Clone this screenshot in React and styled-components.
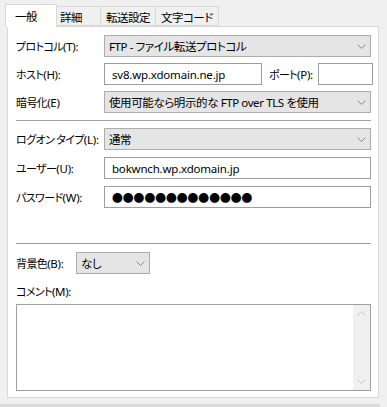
import React from "react";
import styled, { createGlobalStyle } from "styled-components";

const GlobalStyle = createGlobalStyle`
   html, body {
      margin: 0;
      padding: 0;
      background: #f0f0f0;
   }
   body {
      font-family: "Noto Sans", "Noto Sans CJK JP", sans-serif;
      font-size: 11.5px;
      color: #000;
      font-feature-settings: "palt";
   }
`;

const Window = styled.div`
   width: 387px;
   height: 407px;
   padding-top: 4px;
   box-sizing: border-box;
   overflow: hidden;
`;

const TabBar = styled.div`
   display: flex;
   align-items: flex-end;
   height: 22px;
   margin-left: 7px;
`;

const Tab = styled.div`
   position: relative;
   box-sizing: border-box;
   display: flex;
   align-items: center;
   min-width: ${p => (p.$active ? 52 : 47)}px;
   height: ${p => (p.$active ? 23 : 20)}px;
   margin: ${p => (p.$active ? "0 -2px -1px -2px" : "0 0 0 -1px")};
   padding: ${p => (p.$active ? "1px 8px 1px 9px" : "2px 5px 0")};
   background: ${p => (p.$active ? "#fff" : "#f0f0f0")};
   border: 1px solid #d9d9d9;
   border-bottom: ${p => (p.$active ? "none" : "1px solid #d9d9d9")};
   z-index: ${p => (p.$active ? 2 : 1)};
   font-family: "Noto Sans CJK JP", sans-serif;
   font-size: 11.5px;
   letter-spacing: -0.5px;
   white-space: nowrap;
`;

const Panel = styled.div`
   margin-left: 7px;
   width: 372px;
   height: 372px;
   box-sizing: border-box;
   background: #fff;
   border: 1px solid #d9d9d9;
   padding: 8px 7px 0 8px;
   display: flex;
   flex-direction: column;
`;

const Group = styled.div`
   display: flex;
   flex-direction: column;
   gap: ${p => p.$gap || 6}px;
`;

const Row = styled.div`
   display: flex;
   align-items: center;
   height: 22px;
`;

const LabelBox = styled.span`
   flex: none;
   width: ${p => (p.$width ? `${p.$width}px` : "auto")};
   margin-left: ${p => p.$gap || 0}px;
   font-family: "Noto Sans CJK JP", sans-serif;
   font-size: 11px;
   letter-spacing: -0.6px;
   white-space: nowrap;
`;

const Key = styled.span`
   font-family: "Noto Sans", sans-serif;
   font-size: 11.5px;
   letter-spacing: -0.3px;
`;

const Gap = styled.span`
   display: inline-block;
   width: 2px;
`;

const Combo = styled.div`
   flex: ${p => (p.$width ? "none" : 1)};
   width: ${p => (p.$width ? `${p.$width}px` : "auto")};
   height: 22px;
   box-sizing: border-box;
   display: flex;
   align-items: center;
   justify-content: space-between;
   padding: 0 4px 0 4px;
   background: #e5e5e5;
   border: 1px solid #adadad;
   letter-spacing: -0.4px;
   white-space: nowrap;
`;

const Input = styled.div`
   flex: ${p => (p.$width ? "none" : 1)};
   width: ${p => (p.$width ? `${p.$width}px` : "auto")};
   height: 22px;
   box-sizing: border-box;
   display: flex;
   align-items: center;
   padding: 0 7px;
   background: #fff;
   border: 1px solid #9d9d9d;
   margin-left: ${p => p.$gap || 0}px;
   letter-spacing: -0.2px;
   white-space: nowrap;
`;

const Dots = styled.span`
   font-family: "Noto Sans CJK JP", sans-serif;
   font-size: 10.8px;
   letter-spacing: 0;
`;

const Separator = styled.div`
   height: 1px;
   background: #a0a0a0;
   margin: ${p => p.$top}px 0 ${p => p.$bottom}px;
`;

const CommentLabel = styled(LabelBox)`
   display: block;
   height: 18px;
   line-height: 18px;
   margin: 8px 0 4px;
`;

const TextArea = styled.div`
   height: 87px;
   box-sizing: border-box;
   border: 1px solid #a0a0a0;
   background: #fff;
   display: flex;
   justify-content: flex-end;
`;

const ScrollBar = styled.div`
   width: 17px;
   background: #f0f0f0;
   display: flex;
   flex-direction: column;
   justify-content: space-between;
   align-items: center;
   padding: 6px 0;
`;

const Footer = styled.div`
   width: 380px;
   height: 4px;
   margin-top: 6px;
   background: #dadada;
`;

const Chevron = ({ up, color = "#8a8a8a" }) => (
   <svg width="9" height="5" viewBox="0 0 9 5">
      <polyline
         points={up ? "0.5,4.5 4.5,0.5 8.5,4.5" : "0.5,0.5 4.5,4.5 8.5,0.5"}
         fill="none"
         stroke={color}
         strokeWidth="1"
      />
   </svg>
);

const Label = ({ text, hotkey, colon = true, width, gap }) => (
   <LabelBox $width={width} $gap={gap}>
      {text}
      <Key>({hotkey}){colon ? ":" : ""}</Key>
   </LabelBox>
);

const Select = ({ value, width }) => (
   <Combo $width={width}>
      <span>{value}</span>
      <Chevron />
   </Combo>
);

export default function App() {
   return (
      <Window>
         <GlobalStyle />
         <TabBar>
            <Tab $active>一般</Tab>
            <Tab>詳細</Tab>
            <Tab>転送設定</Tab>
            <Tab>文字コード</Tab>
         </TabBar>
         <Panel>
            <Group $gap={6}>
               <Row>
                  <Label width={88} text="プロトコル" hotkey="T" />
                  <Select value="FTP - ファイル転送プロトコル" />
               </Row>
               <Row>
                  <Label width={88} text="ホスト" hotkey="H" />
                  <Input $width={158}>sv8.wp.xdomain.ne.jp</Input>
                  <Label gap={7} width={42} text="ポート" hotkey="P" />
                  <Input $gap={7} $width={55} />
               </Row>
               <Row>
                  <Label width={88} text="暗号化" hotkey="E" colon={false} />
                  <Select value="使用可能なら明示的な FTP over TLS を使用" />
               </Row>
            </Group>
            <Separator $top={7} $bottom={7} />
            <Group $gap={7}>
               <Row>
                  <Label width={88} text={<>ログオン<Gap />タイプ</>} hotkey="L" />
                  <Select value="通常" />
               </Row>
               <Row>
                  <Label width={88} text="ユーザー" hotkey="U" />
                  <Input>bokwnch.wp.xdomain.jp</Input>
               </Row>
               <Row>
                  <Label width={88} text="パスワード" hotkey="W" />
                  <Input>
                     <Dots>●●●●●●●●●●●●●</Dots>
                  </Input>
               </Row>
            </Group>
            <Separator $top={35} $bottom={8} />
            <Row>
               <Label width={60} text="背景色" hotkey="B" />
               <Select value="なし" width={74} />
            </Row>
            <CommentLabel>
               コメント<Key>(M):</Key>
            </CommentLabel>
            <TextArea>
               <ScrollBar>
                  <Chevron up color="#c4c4c4" />
                  <Chevron color="#c4c4c4" />
               </ScrollBar>
            </TextArea>
         </Panel>
         <Footer />
      </Window>
   );
}
